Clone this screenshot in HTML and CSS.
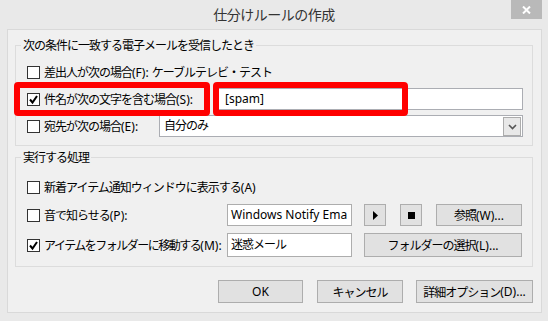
FILE: index.html
```html
<!DOCTYPE html>
<html lang="ja">
<head>
  <meta charset="UTF-8">
  <title>仕分けルールの作成</title>
  <link rel="stylesheet" href="styles.css">
</head>
<body>
  <div class="window">
    <div class="titlebar">
      <span></span>
      <h1 class="title">仕分けルールの作成</h1>
      <button class="close" type="button">
        <svg width="9" height="8" viewBox="0 0 9 8"><path d="M1 0.5 L8 7.5 M8 0.5 L1 7.5" stroke="#fff" stroke-width="2"/></svg>
      </button>
    </div>

    <div class="panel">
      <div class="group group-cond">
        <div class="group-title">次の条件に一致する電子メールを受信したとき</div>
        <div class="row row-first">
          <span class="check"></span>
          <span class="label">差出人が次の場合<span class="key">(F): </span>ケーブルテレビ・テスト</span>
        </div>
        <div class="row row-mark">
          <span class="check"><svg width="11" height="11" viewBox="0 0 11 11"><path d="M2 5.5 L4.5 8.5 L9 2" fill="none" stroke="#000" stroke-width="2"/></svg></span>
          <span class="label">件名が次の文字を含む場合<span class="key">(S):</span></span>
          <div class="field field-subject">[spam]</div>
          <span class="mark mark-label"></span>
          <span class="mark mark-field"></span>
        </div>
        <div class="row">
          <span class="check"></span>
          <span class="label">宛先が次の場合<span class="key">(E):</span></span>
          <div class="field select">
            <span>自分のみ</span>
            <span class="select-btn"><svg width="9" height="6" viewBox="0 0 9 6"><path d="M1 1 L4.5 4.5 L8 1" fill="none" stroke="#555" stroke-width="1.6"/></svg></span>
          </div>
        </div>
      </div>

      <div class="group group-action">
        <div class="group-title">実行する処理</div>
        <div class="row row-a">
          <span class="check"></span>
          <span class="label">新着アイテム通知ウィンドウに表示する<span class="key">(A)</span></span>
        </div>
        <div class="row row-p">
          <span class="check"></span>
          <span class="label">音で知らせる<span class="key">(P):</span></span>
          <div class="field field-small">Windows Notify Ema</div>
          <button class="btn btn-icon" type="button"><svg width="5" height="9" viewBox="0 0 5 9"><path d="M0 0 L5 4.5 L0 9 Z" fill="#000"/></svg></button>
          <button class="btn btn-icon btn-gap" type="button"><svg width="7" height="7" viewBox="0 0 7 7"><rect width="7" height="7" fill="#000"/></svg></button>
          <button class="btn btn-browse btn-gap" type="button">参照<span class="key">(W)...</span></button>
        </div>
        <div class="row row-m">
          <span class="check"><svg width="11" height="11" viewBox="0 0 11 11"><path d="M2 5.5 L4.5 8.5 L9 2" fill="none" stroke="#000" stroke-width="2"/></svg></span>
          <span class="label">アイテムをフォルダーに移動する<span class="key">(M):</span></span>
          <div class="field field-small">迷惑メール</div>
          <button class="btn btn-folder" type="button">フォルダーの選択<span class="key">(L)...</span></button>
        </div>
      </div>

      <div class="actions">
        <button class="btn btn-ok" type="button">OK</button>
        <button class="btn btn-cancel" type="button">キャンセル</button>
        <button class="btn btn-more" type="button">詳細オプション<span class="key">(D)...</span></button>
      </div>
    </div>
  </div>
</body>
</html>
```

FILE: styles.css
```css
body {
  margin: 0;
  background-color: #e9e9e9;
  font-family: "Noto Sans", "Noto Sans CJK JP", sans-serif;
  font-size: 12px;
  letter-spacing: -1px;
  color: #000;
}

.window {
  width: 548px;
  height: 321px;
}

.titlebar {
  height: 29px;
  display: grid;
  grid-template-columns: 1fr auto 1fr;
}

.title {
  margin: 0;
  font-size: 14px;
  font-weight: normal;
  letter-spacing: -0.5px;
  line-height: 29px;
  color: #333;
}

.close {
  justify-self: end;
  align-self: start;
  width: 31px;
  height: 19px;
  margin-right: 6px;
  padding: 0;
  border: none;
  background-color: #b9b9b9;
  display: flex;
  justify-content: center;
  align-items: center;
}

.panel {
  margin: 0 6px 0 7px;
  height: 284px;
  box-sizing: border-box;
  border: 1px solid #d9d9d9;
  background-color: #f0f0f0;
  padding: 15px 8px 0 7px;
}

.group {
  box-sizing: border-box;
  border: 1px solid #dcdcdc;
}

.group-cond {
  height: 101px;
  padding: 0 9px 0 11px;
}

.group-action {
  height: 110px;
  margin-top: 11px;
  padding: 0 10px 0 11px;
}

.group-title {
  width: fit-content;
  margin: -8px 0 0 -6px;
  padding: 0 2px;
  line-height: 16px;
  background-color: #f0f0f0;
}

.row {
  display: flex;
  align-items: center;
  height: 22px;
  margin-top: 5px;
  white-space: nowrap;
}

.row-first {
  margin-top: 7px;
}

.row-mark {
  position: relative;
}

.row-a {
  margin-top: 10px;
}

.row-p {
  margin-top: 6px;
}

.row-m {
  height: 24px;
  margin-top: 7px;
}

.row-m .label {
  letter-spacing: -1.5px;
}

.key {
  letter-spacing: 0;
}

.check {
  flex: none;
  width: 13px;
  height: 13px;
  box-sizing: border-box;
  border: 1px solid #333;
  background-color: #fff;
  margin-right: 4px;
  display: flex;
  justify-content: center;
  align-items: center;
}

.label {
  flex: 1;
}

.field {
  box-sizing: border-box;
  height: 22px;
  border: 1px solid #abadb3;
  background-color: #fff;
  padding: 0 7px;
  line-height: 20px;
  letter-spacing: 0;
  white-space: nowrap;
  overflow: hidden;
}

.field-subject {
  width: 306px;
}

.select {
  width: 364px;
  display: flex;
  align-items: flex-start;
  padding: 0 1px 0 4px;
  letter-spacing: -1px;
}

.select-btn {
  margin: 1px 0 0 auto;
  width: 18px;
  height: 19px;
  box-sizing: border-box;
  border: 1px solid #acacac;
  background-color: #e8e8e8;
  display: flex;
  justify-content: center;
  align-items: center;
}

.field-small {
  width: 125px;
  height: 100%;
  padding: 0 3px;
  border-color: #adadad;
}

.row-m .field-small {
  line-height: 22px;
  letter-spacing: -1px;
}

.mark {
  position: absolute;
  top: -6px;
  height: 34px;
  box-sizing: border-box;
  border: 6px solid #ff0000;
  border-radius: 4px;
}

.mark-label {
  left: -13px;
  width: 196px;
}

.mark-field {
  left: 186px;
  width: 195px;
}

.btn {
  box-sizing: border-box;
  height: 22px;
  padding: 0;
  border: 1px solid #adadad;
  background-color: #e1e1e1;
  font: inherit;
  letter-spacing: -1px;
  color: #000;
  display: flex;
  justify-content: center;
  align-items: center;
}

.btn-icon {
  width: 22px;
  margin-left: 12px;
}

.btn-gap {
  margin-left: 14px;
}

.btn-browse {
  width: 86px;
}

.btn-folder {
  width: 158px;
  height: 24px;
  margin-left: 12px;
}

.actions {
  display: flex;
  justify-content: flex-end;
  margin-top: 13px;
}

.actions .btn {
  height: 23px;
}

.btn-ok {
  width: 85px;
  letter-spacing: 0;
}

.btn-cancel {
  width: 86px;
  margin-left: 14px;
}

.btn-more {
  width: 117px;
  margin-left: 13px;
}
```
